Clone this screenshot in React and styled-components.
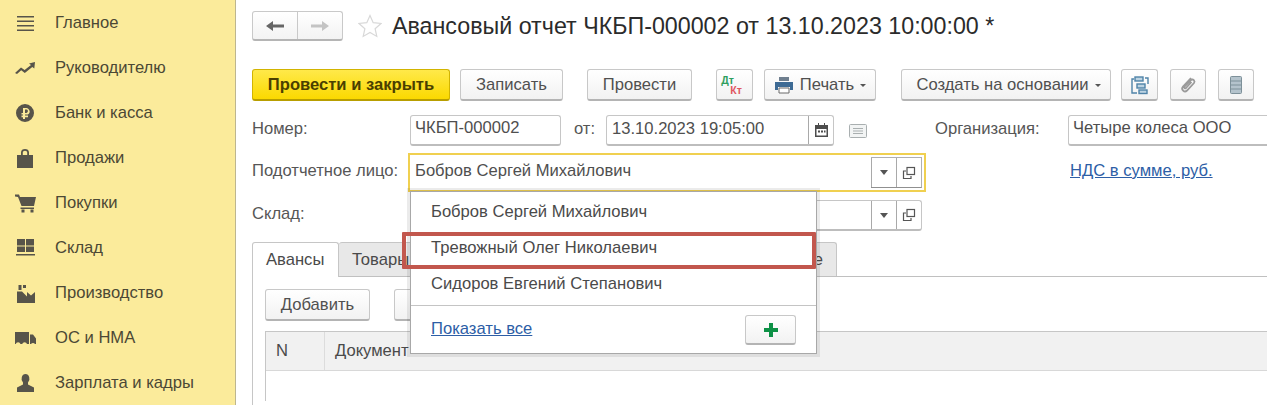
import React from "react";
import styled, { createGlobalStyle } from "styled-components";

const Global = createGlobalStyle`
  html, body { margin: 0; padding: 0; height: 405px; overflow: hidden; background: #fff; }
  body { font-family: "Liberation Sans", Arial, sans-serif; font-size: 16.6px; color: #4a4a4a; }
  * { box-sizing: border-box; }
`;

const Page = styled.div`display: flex; width: 1267px; height: 405px; overflow: hidden; position: relative;`;
const Sidebar = styled.nav`
  flex: none; width: 236px; height: 405px; background: #fbeb9b; border-right: 1px solid #bdb68f;
`;
const NavItem = styled.div`display: flex; align-items: center; height: 45px; color: #4b4835;`;
const NavIcon = styled.span`
  flex: none; width: 55px; display: flex; justify-content: flex-start; padding-left: 13px;
  svg { display: block; width: 24px; height: 24px; fill: #57544a; }
`;

const Main = styled.main`flex: none; width: 1031px; padding: 11px 0 0 16px; display: flex; flex-direction: column;`;
const Header = styled.header`display: flex; align-items: center; height: 30px;`;
const NavGroup = styled.div`
  display: flex; width: 91px; height: 30px; background: linear-gradient(#fff, #f3f3f3);
  border: 1px solid #c9c9c9; border-bottom: 2px solid #b5b5b5; border-radius: 3px;
`;
const NavBtn = styled.div`
  flex: 1; display: flex; align-items: center; justify-content: center;
  & + & { border-left: 1px solid #c9c9c9; }
`;
const Star = styled.svg`margin-left: 15px; width: 24px; height: 24px; fill: #fff; stroke: #d8d8d8; stroke-width: 1.2;`;
const Title = styled.h1`margin: 0 0 0 10px; font-weight: 400; font-size: 23.25px; color: #2b2b2b; white-space: nowrap;`;

const Toolbar = styled.div`display: flex; align-items: stretch; height: 32px; margin-top: 28px;`;
const Button = styled.div`
  flex: none; display: flex; align-items: center; justify-content: center; gap: 6px;
  width: ${p => p.$w}px; height: ${p => p.$h || 32}px; margin-left: ${p => p.$ml || 0}px;
  padding-left: ${p => p.$pl || 0}px;
  background: linear-gradient(#fff, #f2f2f2);
  border: 1px solid #c8c8c8; border-bottom: 2px solid #b4b4b4; border-radius: 3px;
  color: #505050; white-space: nowrap;
`;
const PrimaryButton = styled(Button)`
  background: linear-gradient(#ffe94a, #fbd900);
  border-color: #d2b400; border-bottom-color: #b89e00;
  color: #4a3f00; font-weight: 700;
`;
const Caret = styled.span`
  width: 0; height: 0; margin-top: 2px;
  border-left: 3px solid transparent; border-right: 3px solid transparent; border-top: 3px solid #555;
`;
const DtKt = styled.span`
  display: flex; flex-direction: column; font-size: 10.5px; font-weight: 700; line-height: 10px;
`;
const Dt = styled.span`color: #2e9e5e; margin-left: -6px;`;
const Kt = styled.span`color: #e0575f; margin-left: 3px;`;

const FormRow = styled.div`
  display: flex; align-items: center; height: ${p => p.$h}px; margin-top: ${p => p.$mt}px; white-space: nowrap;
`;
const Label = styled.span`flex: none; width: ${p => p.$w}px; margin-left: ${p => p.$ml || 0}px; padding-bottom: 4px; color: #565656;`;
const Field = styled.div`
  flex: none; display: flex; align-items: center; width: ${p => p.$w}px; height: 31px; padding-left: ${p => p.$pl || 4}px;
  border: 1px solid #c6c6c6; border-bottom: 2px solid #bdbdbd; border-radius: 3px; background: #fff; color: #4f4f4f;
  margin-left: ${p => p.$ml || 0}px;
`;
const FieldText = styled.span`flex: 1; padding-bottom: 3px;`;
const FieldBtn = styled.span`
  flex: none; align-self: stretch; width: ${p => p.$w || 25}px; display: flex; align-items: center; justify-content: center;
  border-left: 1px solid #a9a9a9;
`;
const Focus = styled.div`
  flex: none; width: 518px; height: 39px; padding: 2px 2px 2px 3px; margin-left: -2px; border: 2px solid #f0d050;
`;
const FocusField = styled(Field)`width: 100%; height: 31px; padding-left: 2px; border: none;`;
const FocusBtns = styled.div`display: flex; align-self: stretch; border: 1px solid #b0b0b0; border-left: none; border-bottom: 1px solid #909090;`;
const Link = styled.a`color: #2d5ea6; text-decoration: underline; margin-left: ${p => p.$ml || 0}px; padding-bottom: ${p => p.$pb || 0}px;`;
const CommentIcon = styled.svg`flex: none; width: 18px; height: 14px; margin-left: 15px; fill: #f2f4f4; stroke: #a9afb0;`;

const Tabs = styled.div`display: flex; height: 35px; margin-top: 11px; border-bottom: 1px solid #c0c0c0;`;
const Tab = styled.div`
  flex: none; width: ${p => p.$w}px; height: ${p => p.$active ? 35 : 34}px; padding: 0 13px;
  display: flex; align-items: center; justify-content: ${p => p.$end ? "flex-end" : "flex-start"};
  background: ${p => p.$active ? "#fff" : "#e8e8e8"};
  border: 1px solid #c6c6c6; border-left: ${p => p.$active ? "1px solid #c6c6c6" : "none"};
  border-bottom: none; border-radius: 3px 3px 0 0; color: #4a4a4a;
`;
const Panel = styled.section`flex: 1; padding: 12px 0 0 12px; border-left: 1px solid #c6c6c6;`;
const PanelBar = styled.div`display: flex; height: 32px;`;
const Table = styled.div`margin-top: 10px; height: 70px; border-left: 1px solid #c6c6c6;`;
const TableHead = styled.div`display: flex; height: 40px; background: #f1f1f1; border-top: 1px solid #c6c6c6; border-bottom: 1px solid #d8d8d8;`;
const Th = styled.div`
  flex: ${p => p.$w ? "none" : 1}; width: ${p => p.$w}px; display: flex; align-items: center; padding-left: 10px; color: #4a4a4a;
  & + & { border-left: 1px solid #dcdcdc; }
`;

const Dropdown = styled.div`
  position: absolute; left: 410px; top: 191px; width: 407px; height: 163px; padding-top: 2px; background: #fff;
  border: 1px solid #a8a8a8; box-shadow: 0 0 0 3px rgba(0,0,0,.08); color: #4a4a4a;
`;
const Option = styled.div`height: 36px; display: flex; align-items: center; padding-left: 20px;`;
const Sep = styled.div`height: 1px; background: #c4c4c4; margin-top: 3px;`;
const DropFoot = styled.div`display: flex; align-items: center; justify-content: space-between; height: 48px; padding: 0 20px;`;
const Highlight = styled.div`
  position: absolute; left: 402px; top: 232px; width: 414px; height: 37px;
  border: 4px solid #c2574d; border-radius: 1px; pointer-events: none;
`;

const icons = [
  <svg viewBox="0 0 24 24"><path d="M4 5h17v1.400H4zM4 9.500h17v1.400H4zM4 14h17v1.400H4zM4 18.600h17V20H4z" /></svg>,
  <svg viewBox="0 0 24 24"><path d="M2 17l6-5.500 3.600 2.400L18 9l-2-1.600 6-1.400-.7 6.400-2-1.500-7.500 6-3.600-2.600-4.200 3.700z" /></svg>,
  <svg viewBox="0 0 24 24"><path fillRule="evenodd" d="M12 3a9 9 0 1 1 0 18 9 9 0 0 1 0-18zM10 7v5H8.500v1.600H10v1H8.500v1.600H10V18h2v-1.800h3v-1.600h-3v-1h1.500c2 0 3.200-1.200 3.200-3.100S14.500 7 13.500 7zm2 1.600h1.300c1 0 1.600.6 1.600 1.500s-.6 1.900-1.600 1.900H12z" /></svg>,
  <svg viewBox="0 0 24 24"><path fillRule="evenodd" d="M4 9h4V6.500C8 4 9.800 3 12 3s4 1 4 3.500V9h4v13H4zM9.800 9h4.400V6.500c0-1.100-1-1.800-2.200-1.800s-2.200.7-2.200 1.800z" /></svg>,
  <svg viewBox="0 0 24 24"><path d="M2 3.500h4l1 2.500h16l-2 9H8.500L5 6 2 5.500zM7.500 16.500H21V18H7.500zM8.500 18.500h3v3h-3zM17.500 18.500h3v3h-3z" /></svg>,
  <svg viewBox="0 0 24 24"><path d="M4 3h8v6.500H4zM13 3h8v6.500h-8zM4 10.500h8V16H4zM13 10.500h8V16h-8zM3 18h19v1.600H3z" /></svg>,
  <svg viewBox="0 0 24 24"><path d="M5.500 4h3v5h-3zM10 4h3v3h-3zM4 22V10.500h5l5 5V11l4 3.500 4-3.500v11z" /></svg>,
  <svg viewBox="0 0 24 24"><path d="M2 6h14v12h-2a2.500 2.500 0 0 0-4.800 0H7.500a2.500 2.500 0 0 0-4.800 0H2zM17 8.500h3l3 4V18h-1a2.500 2.500 0 0 0-4 0H17z" /></svg>,
  <svg viewBox="0 0 24 24"><path d="M12.500 3a4 4.800 0 0 1 2.500 8.500v2l6 3V21H4v-4.500l6-3v-2A4 4.800 0 0 1 12.500 3z" /></svg>,
];
const navNames = ["Главное", "Руководителю", "Банк и касса", "Продажи", "Покупки", "Склад", "Производство", "ОС и НМА", "Зарплата и кадры"];

const Arrow = ({ dir, color }) => (
  <svg width="18" height="12" viewBox="0 0 18 12" fill={color} style={dir === "r" ? { transform: "scaleX(-1)" } : undefined}>
    <path d="M0 6l7-5v3.600h11v2.800H7V11z" />
  </svg>
);
const CopyIcon = () => (
  <svg width="14" height="14" viewBox="0 0 14 14" fill="none" stroke="#555" strokeWidth="1.200">
    <rect x="5" y="1.500" width="7.500" height="7" /><path d="M4 5H1.500v7.500H9V10" />
  </svg>
);
const Tri = () => <svg width="8" height="5" viewBox="0 0 8 5" fill="#555"><path d="M0 0h8L4 5z" /></svg>;
const IconSvg = styled.svg`display: block;`;
const FieldValue = styled.span`padding-bottom: 4px;`;

export default function App() {
  return (
    <>
      <Global />
      <Page>
        <Sidebar>
          {navNames.map((n, i) => (
            <NavItem key={n}><NavIcon>{icons[i]}</NavIcon>{n}</NavItem>
          ))}
        </Sidebar>
        <Main>
          <Header>
            <NavGroup>
              <NavBtn><Arrow color="#666" /></NavBtn>
              <NavBtn><Arrow dir="r" color="#c4c4c4" /></NavBtn>
            </NavGroup>
            <Star viewBox="0 0 24 24"><path d="M12 1.500l3.200 7.200 7.800.8-5.900 5.200 1.700 7.700L12 18.400l-6.800 4 1.700-7.700L1 9.500l7.800-.8z" /></Star>
            <Title>Авансовый отчет ЧКБП-000002 от 13.10.2023 10:00:00 *</Title>
          </Header>

          <Toolbar>
            <PrimaryButton $w={198}>Провести и закрыть</PrimaryButton>
            <Button $w={103} $ml={10}>Записать</Button>
            <Button $w={105} $ml={24}>Провести</Button>
            <Button $w={37} $ml={24}><DtKt><Dt>Дт</Dt><Kt>Кт</Kt></DtKt></Button>
            <Button $w={112} $ml={11}>
              <IconSvg width="20" height="18" viewBox="0 0 20 18">
                <path fill="#6f7f8f" d="M5 1h10v4H5z" />
                <path fill="#3d6a94" d="M1 6h18v8h-3v-3H4v3H1z" />
                <path fill="#fff" stroke="#6a6a6a" d="M5 12h10v5H5z" />
              </IconSvg>
              Печать <Caret />
            </Button>
            <Button $w={210} $ml={25} $pl={5}>Создать на основании <Caret /></Button>
            <Button $w={37} $ml={10}>
              <IconSvg width="20" height="20" viewBox="0 0 20 20" fill="none" stroke="#4f83a8" strokeWidth="1.400">
                <rect x="5" y="2" width="8" height="4" fill="#bcd3e2" /><rect x="7" y="9" width="8" height="4" fill="#bcd3e2" /><rect x="9" y="15" width="8" height="3.500" fill="#bcd3e2" />
                <path d="M4 4H2v14h5M15 3h3v6" />
              </IconSvg>
            </Button>
            <Button $w={36} $ml={12}>
              <IconSvg width="18" height="20" viewBox="0 0 18 20" fill="none" stroke="#9a9a9a" strokeWidth="1.800">
                <path d="M12 3L4 11.500c-2.500 3 1.500 6.500 4 4l7-7.500c1.500-2-1-4.500-3-3L5.500 11.500c-1 1.200.5 2.500 1.500 1.500l5.500-6" />
              </IconSvg>
            </Button>
            <Button $w={36} $ml={12}>
              <IconSvg width="14" height="20" viewBox="0 0 14 20" fill="#b4c3cc" stroke="#7d9099">
                <rect x="1.500" y="1.500" width="11" height="17" rx="1" /><path d="M1.500 6h11M1.500 10h11M1.500 14h11" />
              </IconSvg>
            </Button>
          </Toolbar>

          <FormRow $h={31} $mt={14}>
            <Label $w={158}>Номер:</Label>
            <Field $w={151}><FieldValue>ЧКБП-000002</FieldValue></Field>
            <Label $w={32} $ml={13}>от:</Label>
            <Field $w={228} $pl={5}>
              <FieldText>13.10.2023 19:05:00</FieldText>
              <FieldBtn>
                <IconSvg width="13" height="14" viewBox="0 0 13 14" fill="#4d4d4d"><path d="M0 2h3V0h1v2h5V0h1v2h3v12H0zM1.500 6v6.500h10V6z" /><path d="M3 7.500h2v2H3zM6 7.500h2v2H6zM9 7.500h1.500v2H9z" /></IconSvg>
              </FieldBtn>
            </Field>
            <CommentIcon viewBox="0 0 18 14"><rect x=".5" y=".5" width="17" height="13" rx="1" /><path d="M4 4.500h10M4 7h10M4 9.500h10" /></CommentIcon>
            <Label $w={133} $ml={68}>Организация:</Label>
            <Field $w={210}><FieldValue>Четыре колеса ООО</FieldValue></Field>
          </FormRow>

          <FormRow $h={39} $mt={7}>
            <Label $w={158}>Подотчетное лицо:</Label>
            <Focus>
              <FocusField $w={510}>
                <FieldText>Бобров Сергей Михайлович</FieldText>
                <FocusBtns>
                  <FieldBtn><Tri /></FieldBtn>
                  <FieldBtn><CopyIcon /></FieldBtn>
                </FocusBtns>
              </FocusField>
            </Focus>
            <Link $ml={144} $pb={3}>НДС в сумме, руб.</Link>
          </FormRow>

          <FormRow $h={31} $mt={8}>
            <Label $w={158}>Склад:</Label>
            <Field $w={512}>
              <FieldText />
              <FieldBtn><Tri /></FieldBtn>
              <FieldBtn><CopyIcon /></FieldBtn>
            </Field>
          </FormRow>

          <Tabs>
            <Tab $w={87} $active>Авансы</Tab>
            <Tab $w={200}>Товары</Tab>
            <Tab $w={298} $end>Прочее</Tab>
          </Tabs>
          <Panel>
            <PanelBar>
              <Button $w={105}>Добавить</Button>
              <Button $w={60} $ml={24} />
            </PanelBar>
            <Table>
              <TableHead>
                <Th $w={58}>N</Th>
                <Th>Документ</Th>
              </TableHead>
            </Table>
          </Panel>
        </Main>

        <Dropdown>
          <Option>Бобров Сергей Михайлович</Option>
          <Option>Тревожный Олег Николаевич</Option>
          <Option>Сидоров Евгений Степанович</Option>
          <Sep />
          <DropFoot>
            <Link $pb={2}>Показать все</Link>
            <Button $w={51} $h={30}>
              <IconSvg width="14" height="14" viewBox="0 0 14 14" fill="#0d9146"><path d="M5 0h4v5h5v4H9v5H5V9H0V5h5z" /></IconSvg>
            </Button>
          </DropFoot>
        </Dropdown>
        <Highlight />
      </Page>
    </>
  );
}
